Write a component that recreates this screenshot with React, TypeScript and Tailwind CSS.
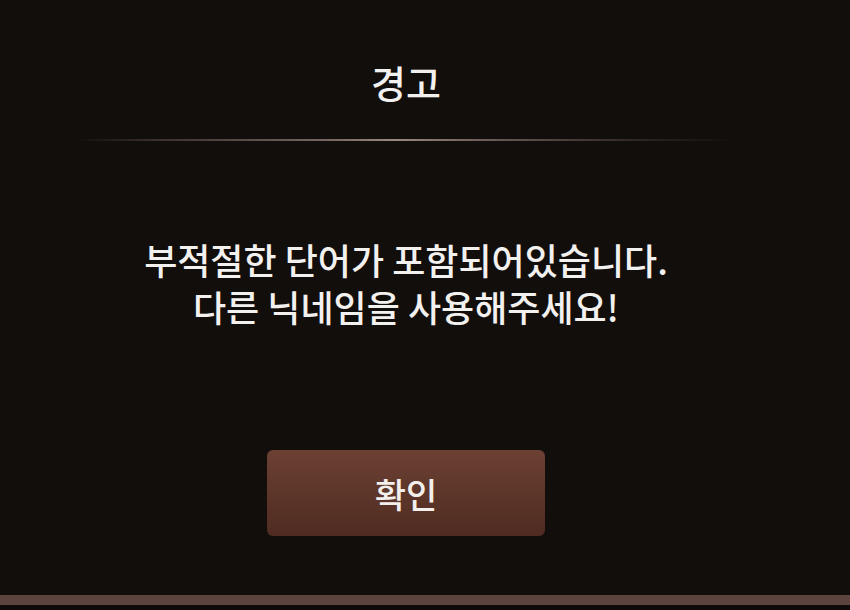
export default function App(): JSX.Element {
  return (
    <div
      className="flex h-[610px] w-[850px] flex-col overflow-hidden bg-[#120e0b] text-[#f3f1ef]"
      style={{ fontFamily: '"Noto Sans CJK KR", "Noto Sans", sans-serif' }}
    >
      {/* Dialog body */}
      <div className="flex flex-1 flex-col items-center pr-[38px]">
        <h1 className="mt-[60px] text-[38px] font-medium leading-[44px]">경고</h1>

        {/* Glow divider */}
        <div className="mt-[35px] h-[2px] w-[660px] bg-[linear-gradient(90deg,transparent_0%,#3a302c_12%,#7d6b66_40%,#9a8883_48%,#6d5c57_62%,#2e2622_85%,transparent_100%)]" />

        <p className="mt-[95px] text-center text-[36px] font-medium leading-[47px]">
          부적절한 단어가 포함되어있습니다.
          <br />
          다른 닉네임을 사용해주세요!
        </p>

        <button className="mt-[120px] flex h-[86px] w-[278px] items-center justify-center rounded-[6px] bg-gradient-to-b from-[#6c4133] to-[#4f2b21] text-[34px] font-medium text-[#f3efed]">
          확인
        </button>
      </div>

      {/* Bottom strip */}
      <div className="h-[10px] bg-[#5c433d]" />
      <div className="h-[5px] bg-[#0d0a09]" />
    </div>
  )
}
